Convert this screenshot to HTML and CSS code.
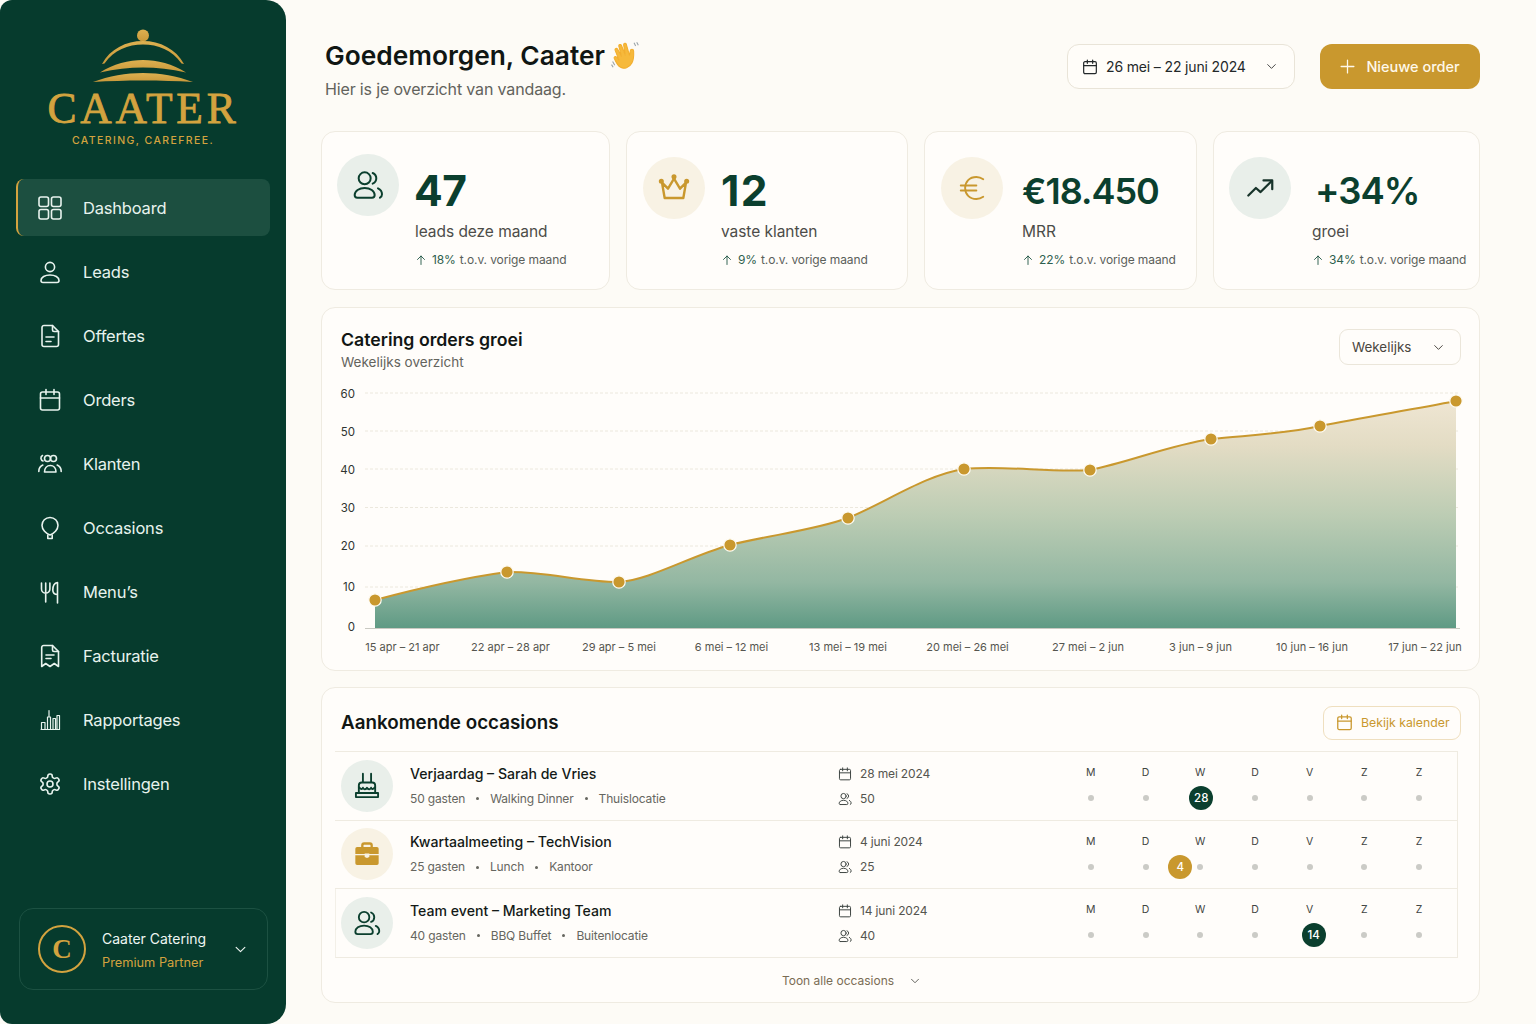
FILE: index.html
```html
<!DOCTYPE html>
<html lang="nl">
<head>
<meta charset="utf-8">
<title>Caater dashboard</title>
<link rel="stylesheet" href="styles.css">
</head>
<body>
<svg class="sprite" aria-hidden="true">
  <defs>
    <linearGradient id="goldg" x1="0" y1="0" x2="0" y2="1"><stop offset="0" stop-color="#dcb050"/><stop offset="1" stop-color="#c9993a"/></linearGradient>
    <linearGradient id="areag" gradientUnits="userSpaceOnUse" x1="0" y1="400" x2="0" y2="628"><stop offset="0" stop-color="#efe6d3"/><stop offset=".2" stop-color="#e3dcc4"/><stop offset=".5" stop-color="#bdcdb4"/><stop offset=".8" stop-color="#93b7a2"/><stop offset="1" stop-color="#5f9a84"/></linearGradient>
  </defs>
  <symbol id="i-grid" viewBox="0 0 24 24"><rect x="1" y="1" width="9.5" height="9.5" rx="2"/><rect x="13.5" y="1" width="9.5" height="9.5" rx="2"/><rect x="1" y="13.5" width="9.5" height="9.5" rx="2"/><rect x="13.5" y="13.5" width="9.5" height="9.5" rx="2"/></symbol>
  <symbol id="i-user" viewBox="0 0 24 24"><circle cx="12" cy="7" r="4.6"/><path d="M5 22.500h14a2 2 0 0 0 2-2c0-3.200-4-5.500-9-5.500s-9 2.300-9 5.500a2 2 0 0 0 2 2z"/></symbol>
  <symbol id="i-users" viewBox="0 0 24 24"><circle cx="9.500" cy="7" r="4.500"/><path d="M4 21.500h11a2 2 0 0 0 2-2c0-3-3.300-5.300-7.500-5.300S2 16.500 2 19.500a2 2 0 0 0 2 2z"/><path d="M15.500 3a4.300 4.300 0 0 1 0 8"/><path d="M19.500 14.500c2 .9 3 2.700 3 4.500 0 1.200-.6 2-1.500 2.500"/></symbol>
  <symbol id="i-file" viewBox="0 0 24 24"><path d="M6 1.500h8.500L20.500 7.500V20.500a2 2 0 0 1-2 2H6a2 2 0 0 1-2-2V3.500a2 2 0 0 1 2-2z"/><path d="M14.500 1.500V6a1.500 1.500 0 0 0 1.500 1.500h4.500"/><path d="M8 13h8M8 17.500h5"/></symbol>
  <symbol id="i-cal" viewBox="0 0 24 24"><rect x="2.500" y="4" width="19" height="18" rx="2"/><path d="M2.500 10h19M8 1.500v5M16 1.500v5"/></symbol>
  <symbol id="i-people" viewBox="0 0 24 24"><circle cx="9.500" cy="6.500" r="3"/><circle cx="15.500" cy="6.500" r="3"/><path d="M6.500 20c0-3.800 2.500-6.500 5.800-6.500s5.700 2.700 5.700 6.500z"/><path d="M4.500 3.500a3 3 0 0 0 .5 5.500M.8 19.500c0-3 1.500-5.500 4-6.500"/><path d="M23.200 19.500c0-3-1.500-5.500-4-6.500"/></symbol>
  <symbol id="i-balloon" viewBox="0 0 24 24"><path d="M12 1.500c-4.600 0-8 3.500-8 7.800 0 4.500 4 8.200 8 9.700 4-1.500 8-5.200 8-9.700 0-4.300-3.400-7.800-8-7.800z"/><path d="M9.800 19v3.500h4.400V19"/></symbol>
  <symbol id="i-fork" viewBox="0 0 24 24"><path d="M3.500 3v6a4.200 4.200 0 0 0 8.400 0V3M7.700 3v19"/><path d="M19.500 23V2.500c-3 .5-4.700 3.500-4.700 7.500 0 2.800 1.500 4.500 4.700 4.500"/></symbol>
  <symbol id="i-receipt" viewBox="0 0 24 24"><path d="M6 1.500h8.500L20.500 7.500V22.500l-4.200-3-4.300 3-4.300-3-4 3V3.500a2 2 0 0 1 2-2z"/><path d="M14.500 1.500V6A1.500 1.500 0 0 0 16 7.500h4.500"/><path d="M8 11h8M8 14.500h5"/></symbol>
  <symbol id="i-bars" viewBox="0 0 24 24"><path d="M3 21.500h18M3.500 21.500v-7h3.500v7M9.500 21.500V9h3v12.500M11 9V2.500M15 21.500v-11h2.500v11M19 21.500V7.500h2.500v14"/></symbol>
  <symbol id="i-gear" viewBox="0 0 24 24"><path d="M12.220 2h-.44a2 2 0 0 0-2 2v.18a2 2 0 0 1-1 1.730l-.43.25a2 2 0 0 1-2 0l-.15-.08a2 2 0 0 0-2.730.73l-.22.38a2 2 0 0 0 .73 2.730l.15.1a2 2 0 0 1 1 1.720v.51a2 2 0 0 1-1 1.740l-.15.09a2 2 0 0 0-.73 2.730l.22.38a2 2 0 0 0 2.730.73l.15-.08a2 2 0 0 1 2 0l.43.25a2 2 0 0 1 1 1.730V20a2 2 0 0 0 2 2h.44a2 2 0 0 0 2-2v-.18a2 2 0 0 1 1-1.730l.43-.25a2 2 0 0 1 2 0l.15.08a2 2 0 0 0 2.730-.73l.22-.39a2 2 0 0 0-.73-2.730l-.15-.08a2 2 0 0 1-1-1.740v-.5a2 2 0 0 1 1-1.740l.15-.09a2 2 0 0 0 .73-2.730l-.22-.38a2 2 0 0 0-2.730-.73l-.15.08a2 2 0 0 1-2 0l-.43-.25a2 2 0 0 1-1-1.730V4a2 2 0 0 0-2-2z"/><circle cx="12" cy="12" r="3"/></symbol>
  <symbol id="i-chev" viewBox="0 0 24 24"><path d="M5 8.500l7 7 7-7"/></symbol>
  <symbol id="i-plus" viewBox="0 0 24 24"><path d="M12 3v18M3 12h18"/></symbol>
  <symbol id="i-up" viewBox="0 0 24 24"><path d="M12 21V4M5 11l7-7 7 7"/></symbol>
  <symbol id="i-crown" viewBox="0 0 24 24"><path d="M3 8l4.500 4.500L12 5l4.500 7.500L21 8l-2 11.500H5z"/><circle cx="12" cy="3.500" r="1"/><circle cx="2.500" cy="7" r="1"/><circle cx="21.500" cy="7" r="1"/></symbol>
  <symbol id="i-euro" viewBox="0 0 24 24"><path d="M21 5A9.800 9.800 0 0 0 15.500 3.200C10 3.200 6.500 7 6.500 12s3.500 8.800 9 8.800A9.800 9.800 0 0 0 21 19"/><path d="M3 10h12.500M3 14h12.500"/></symbol>
  <symbol id="i-trend" viewBox="0 0 24 24"><path d="M2 18.500l6.500-6.500 4 3.500L22 6"/><path d="M15 5.500h7.500V13"/></symbol>
  <symbol id="i-cake" viewBox="0 0 24 24"><path d="M8.500 1.500v7M15.500 1.500v7"/><path d="M5 11.500c0-1.500 1-2.500 2.500-2.500h9c1.500 0 2.500 1 2.500 2.500V18H5z"/><path d="M5 13c1.500 2 3 2 3.500.5.500 1.500 2.500 2 3.500 0 1 2 3 1.500 3.500 0 .5 1.500 2 1.500 3.500-.5"/><path d="M2.500 18h19v3.500h-19z"/></symbol>
</svg>

<div class="app">
  <aside class="sidebar">
    <div class="brand">
      <svg class="cloche" viewBox="0 0 104 54" aria-hidden="true">
        <circle cx="52" cy="6.500" r="6" fill="url(#goldg)"/>
        <path d="M11 35C19 20 35 12 52 12s33 8 41 23l-2.500-.5C81 21 67 15.500 52 15.500S23 21 13.500 34.500z" fill="url(#goldg)"/>
        <path d="M9 43.500C22 35 38 31 52 31s30 4 43 12.500C80 40 66 38.500 52 38.500S24 40 9 43.500z" fill="url(#goldg)"/>
        <path d="M2 53C18 47 35 44 52 44s34 3 50 9C85 52 70 51.500 52 51.500S19 52 2 53z" fill="url(#goldg)"/>
      </svg>
      <div class="wordmark">CAATER</div>
      <div class="tagline">CATERING, CAREFREE.</div>
    </div>
    <nav class="nav">
      <a class="nav-item active"><svg class="ic nav-ic"><use href="#i-grid"/></svg><span>Dashboard</span></a>
      <a class="nav-item"><svg class="ic nav-ic"><use href="#i-user"/></svg><span>Leads</span></a>
      <a class="nav-item"><svg class="ic nav-ic"><use href="#i-file"/></svg><span>Offertes</span></a>
      <a class="nav-item"><svg class="ic nav-ic"><use href="#i-cal"/></svg><span>Orders</span></a>
      <a class="nav-item"><svg class="ic nav-ic"><use href="#i-people"/></svg><span>Klanten</span></a>
      <a class="nav-item"><svg class="ic nav-ic"><use href="#i-balloon"/></svg><span>Occasions</span></a>
      <a class="nav-item"><svg class="ic nav-ic"><use href="#i-fork"/></svg><span>Menu’s</span></a>
      <a class="nav-item"><svg class="ic nav-ic"><use href="#i-receipt"/></svg><span>Facturatie</span></a>
      <a class="nav-item"><svg class="ic nav-ic thin"><use href="#i-bars"/></svg><span>Rapportages</span></a>
      <a class="nav-item"><svg class="ic nav-ic"><use href="#i-gear"/></svg><span>Instellingen</span></a>
    </nav>
    <div class="profile">
      <div class="avatar">C</div>
      <div class="profile-text">
        <div class="profile-name">Caater Catering</div>
        <div class="profile-tier">Premium Partner</div>
      </div>
      <svg class="ic profile-chev"><use href="#i-chev"/></svg>
    </div>
  </aside>

  <main class="main">
    <header class="topbar">
      <div>
        <h1 class="title">Goedemorgen, Caater
          <svg class="wave" viewBox="0 0 28 28" aria-hidden="true">
            <path d="M9 25.500c-3-1.500-4.500-5-6-8.500-.5-1.300 1.200-2.200 2.200-1l2.300 2.800L3.800 9.500c-.5-1.500 1.500-2.300 2.300-1l3.800 7L7.300 5.800c-.4-1.600 1.800-2.300 2.500-.8l3.600 9.500-1.600-10c-.2-1.600 2-2 2.500-.5l3 10.500.7-4.500c.3-1.800 3-1.800 3.100.2.300 4.500 0 8.300-1.600 11.300-2.300 4.500-7.500 5.800-10.500 4z" fill="#f6b93b" stroke="#f2ae2e" stroke-width="1"/>
            <path d="M21.500 2.500l1.500 3M24 2l1.500 3M1.500 20l2 3.500M.5 23l1.500 2.500" stroke="#9aa3a8" stroke-width="1" fill="none"/>
          </svg>
        </h1>
        <p class="subtitle">Hier is je overzicht van vandaag.</p>
      </div>
      <div class="top-actions">
        <button class="date-btn"><svg class="ic date-ic"><use href="#i-cal"/></svg><span>26 mei – 22 juni 2024</span><svg class="ic date-chev"><use href="#i-chev"/></svg></button>
        <button class="new-btn"><svg class="ic plus-ic"><use href="#i-plus"/></svg><span>Nieuwe order</span></button>
      </div>
    </header>

    <section class="stats">
      <article class="stat stat-a">
        <div class="stat-icon green"><svg class="ic stat-ic"><use href="#i-users"/></svg></div>
        <div><div class="stat-num">47</div><div class="stat-label">leads deze maand</div><div class="stat-delta"><svg class="ic up-ic"><use href="#i-up"/></svg><b>18%</b> t.o.v. vorige maand</div></div>
      </article>
      <article class="stat">
        <div class="stat-icon gold"><svg class="ic stat-ic crown"><use href="#i-crown"/></svg></div>
        <div><div class="stat-num num-wide">12</div><div class="stat-label">vaste klanten</div><div class="stat-delta"><svg class="ic up-ic"><use href="#i-up"/></svg><b>9%</b> t.o.v. vorige maand</div></div>
      </article>
      <article class="stat stat-c">
        <div class="stat-icon gold"><svg class="ic stat-ic euro"><use href="#i-euro"/></svg></div>
        <div><div class="stat-num num-sm">€18.450</div><div class="stat-label">MRR</div><div class="stat-delta"><svg class="ic up-ic"><use href="#i-up"/></svg><b>22%</b> t.o.v. vorige maand</div></div>
      </article>
      <article class="stat stat-d">
        <div class="stat-icon green"><svg class="ic stat-ic trend"><use href="#i-trend"/></svg></div>
        <div><div class="stat-num num-sm num-plus">+34%</div><div class="stat-label">groei</div><div class="stat-delta"><svg class="ic up-ic"><use href="#i-up"/></svg><b>34%</b> t.o.v. vorige maand</div></div>
      </article>
    </section>

    <section class="panel chart-panel">
      <div class="chart-head">
        <div><h2 class="panel-title">Catering orders groei</h2><p class="panel-sub">Wekelijks overzicht</p></div>
        <button class="period-btn"><span>Wekelijks</span><svg class="ic period-chev"><use href="#i-chev"/></svg></button>
      </div>
      <svg class="chart" viewBox="322 380 1157 279" aria-label="Catering orders per week">
        <g class="grid-lines">
          <path d="M365 393H1460M365 431H1460M365 469H1460M365 507.500H1460M365 546H1460M365 587H1460"/>
        </g>
        <path class="axis" d="M365 628.500H1460"/>
        <path fill="url(#areag)" d="M375 600C420 588 470 577 507 572C545 571 580 582 619 582C650 580 690 556 730 545C770 535 815 530 848 518C885 503 925 475 964 469C1005 465 1050 473 1090 470C1130 462 1170 445 1211 439C1250 435 1285 434 1320 426C1365 417 1410 410 1456 401V628H375Z"/>
        <path class="line" d="M375 600C420 588 470 577 507 572C545 571 580 582 619 582C650 580 690 556 730 545C770 535 815 530 848 518C885 503 925 475 964 469C1005 465 1050 473 1090 470C1130 462 1170 445 1211 439C1250 435 1285 434 1320 426C1365 417 1410 410 1456 401"/>
        <g class="dots">
          <circle cx="375" cy="600" r="6.200"/><circle cx="507" cy="572" r="6.200"/><circle cx="619" cy="582" r="6.200"/><circle cx="730" cy="545" r="6.200"/><circle cx="848" cy="518" r="6.200"/><circle cx="964" cy="469" r="6.200"/><circle cx="1090" cy="470" r="6.200"/><circle cx="1211" cy="439" r="6.200"/><circle cx="1320" cy="426" r="6.200"/><circle cx="1456" cy="401" r="6.200"/>
        </g>
        <g class="y-labels">
          <text x="355" y="397.500">60</text><text x="355" y="435.500">50</text><text x="355" y="473.500">40</text><text x="355" y="512">30</text><text x="355" y="550">20</text><text x="355" y="591">10</text><text x="355" y="631">0</text>
        </g>
        <g class="x-labels">
          <text x="402.500" y="651">15 apr – 21 apr</text><text x="510.500" y="651">22 apr – 28 apr</text><text x="619" y="651">29 apr – 5 mei</text><text x="731.500" y="651">6 mei – 12 mei</text><text x="848" y="651">13 mei – 19 mei</text><text x="967.500" y="651">20 mei – 26 mei</text><text x="1088" y="651">27 mei – 2 jun</text><text x="1200.500" y="651">3 jun – 9 jun</text><text x="1312" y="651">10 jun – 16 jun</text><text x="1425" y="651">17 jun – 22 jun</text>
        </g>
      </svg>
    </section>

    <section class="panel occ-panel">
      <div class="occ-head">
        <h2 class="occ-title">Aankomende occasions</h2>
        <button class="cal-btn"><svg class="ic cal-ic"><use href="#i-cal"/></svg><span>Bekijk kalender</span></button>
      </div>
      <div class="occ-list">
        <div class="occ-row">
          <div class="occ-main">
            <div class="occ-icon green"><svg class="ic occ-ic"><use href="#i-cake"/></svg></div>
            <div><div class="occ-name">Verjaardag – Sarah de Vries</div><div class="occ-meta"><span>50 gasten</span><i></i><span>Walking Dinner</span><i></i><span>Thuislocatie</span></div></div>
          </div>
          <div class="occ-when">
            <div class="when-line"><svg class="ic when-ic"><use href="#i-cal"/></svg><span>28 mei 2024</span></div>
            <div class="when-line"><svg class="ic when-ic"><use href="#i-users"/></svg><span>50</span></div>
          </div>
          <div class="week">
            <span class="wd">M</span><span class="wd">D</span><span class="wd">W</span><span class="wd">D</span><span class="wd">V</span><span class="wd">Z</span><span class="wd">Z</span>
            <span class="dot"></span><span class="dot"></span><span class="dot"><b class="badge b-green">28</b></span><span class="dot"></span><span class="dot"></span><span class="dot"></span><span class="dot"></span>
          </div>
        </div>
        <div class="occ-row">
          <div class="occ-main">
            <div class="occ-icon gold"><svg class="brief" viewBox="0 0 24 24" aria-hidden="true"><path d="M8 6.500V4.500A1.500 1.500 0 0 1 9.500 3h5A1.500 1.500 0 0 1 16 4.500v2" fill="none" stroke="#c9982e" stroke-width="2"/><path d="M3.500 6h17A1.500 1.500 0 0 1 22 7.500v4.500H14v-.5h-4v.5H2V7.500A1.500 1.500 0 0 1 3.500 6zM2 13h8v1.500l2 1 2-1V13h8v7a1.500 1.500 0 0 1-1.500 1.500h-17A1.500 1.500 0 0 1 2 20z" fill="#c9982e"/></svg></div>
            <div><div class="occ-name">Kwartaalmeeting – TechVision</div><div class="occ-meta"><span>25 gasten</span><i></i><span>Lunch</span><i></i><span>Kantoor</span></div></div>
          </div>
          <div class="occ-when">
            <div class="when-line"><svg class="ic when-ic"><use href="#i-cal"/></svg><span>4 juni 2024</span></div>
            <div class="when-line"><svg class="ic when-ic"><use href="#i-users"/></svg><span>25</span></div>
          </div>
          <div class="week">
            <span class="wd">M</span><span class="wd">D</span><span class="wd">W</span><span class="wd">D</span><span class="wd">V</span><span class="wd">Z</span><span class="wd">Z</span>
            <span class="dot"></span><span class="dot"></span><span class="dot"><b class="badge b-gold">4</b></span><span class="dot"></span><span class="dot"></span><span class="dot"></span><span class="dot"></span>
          </div>
        </div>
        <div class="occ-row">
          <div class="occ-main">
            <div class="occ-icon green"><svg class="ic occ-ic"><use href="#i-users"/></svg></div>
            <div><div class="occ-name">Team event – Marketing Team</div><div class="occ-meta"><span>40 gasten</span><i></i><span>BBQ Buffet</span><i></i><span>Buitenlocatie</span></div></div>
          </div>
          <div class="occ-when">
            <div class="when-line"><svg class="ic when-ic"><use href="#i-cal"/></svg><span>14 juni 2024</span></div>
            <div class="when-line"><svg class="ic when-ic"><use href="#i-users"/></svg><span>40</span></div>
          </div>
          <div class="week">
            <span class="wd">M</span><span class="wd">D</span><span class="wd">W</span><span class="wd">D</span><span class="wd">V</span><span class="wd">Z</span><span class="wd">Z</span>
            <span class="dot"></span><span class="dot"></span><span class="dot"></span><span class="dot"></span><span class="dot"><b class="badge b-green b-right">14</b></span><span class="dot"></span><span class="dot"></span>
          </div>
        </div>
      </div>
      <div class="occ-foot"><span>Toon alle occasions</span><svg class="ic foot-chev"><use href="#i-chev"/></svg></div>
    </section>
  </main>
</div>
</body>
</html>
```

FILE: styles.css
```css
* { box-sizing: border-box; }
html, body { margin: 0; padding: 0; }
body {
  width: 1536px; height: 1024px; overflow: hidden;
  background: #fdfbf6; color: #14201b;
  font-family: Inter, "Noto Sans", "Liberation Sans", sans-serif;
}
.sprite { width: 0; height: 0; position: absolute; }
.ic { fill: none; stroke: currentColor; stroke-width: 1.8; stroke-linecap: round; stroke-linejoin: round; flex: none; display: block; }
button { font-family: inherit; cursor: pointer; }
h1, h2, p { margin: 0; }

.app { display: flex; height: 1024px; }

/* Sidebar */
.sidebar {
  width: 286px; flex: none; height: 1024px;
  background: #063b2d; border-radius: 12px 20px 20px 12px;
  display: flex; flex-direction: column; padding: 0 16px 34px;
}
.brand { display: flex; flex-direction: column; align-items: center; padding-top: 29px; height: 179px; }
.cloche { width: 104px; height: 54px; display: block; margin-left: -1px; }
.wordmark { font-family: "Liberation Serif", serif; font-size: 43.500px; line-height: 40px; letter-spacing: 3.800px; margin-top: 5px; margin-right: -1px; color: #d3a33f; font-weight: 400; -webkit-text-stroke: .8px #d3a33f; }
.tagline { font-size: 10.500px; line-height: 14px; letter-spacing: 1.400px; color: #d3a33f; font-weight: 500; margin-top: 6px; }
.nav { display: flex; flex-direction: column; gap: 7px; }
.nav-item { height: 57px; display: flex; align-items: center; padding-left: 20px; gap: 21px; color: #e8f3ee; font-size: 16.500px; letter-spacing: -.2px; border-radius: 8px; border-left: 2px solid transparent; }
.nav-item.active { background: #1c4f40; border-left: 2px solid #d3a33f; }
.nav-ic { width: 24px; height: 24px; stroke-width: 1.600; }
.nav-ic.thin { stroke-width: 1.200; }
.profile { margin: auto 2px 0 3px; height: 82px; display: flex; align-items: center; border: 1px solid #1c5142; border-radius: 14px; padding: 0 18px; }
.avatar { width: 48px; height: 48px; border-radius: 50%; border: 2px solid #d3a33f; color: #d3a33f; font-family: "Liberation Serif", serif; font-size: 27px; font-weight: 700; display: flex; align-items: center; justify-content: center; flex: none; }
.profile-text { margin-left: 16px; flex: 1; padding-top: 3px; }
.profile-name { font-size: 14px; line-height: 20px; color: #eef6f2; }
.profile-tier { font-size: 12.800px; line-height: 20px; margin-top: 4px; color: #d3a33f; }
.profile-chev { width: 15px; height: 15px; color: #eef6f2; margin-right: 1px; }

/* Main */
.main { flex: 1; min-width: 0; padding: 42px 56px 0 35px; display: flex; flex-direction: column; }
.topbar { display: flex; justify-content: space-between; padding-left: 4px; height: 89px; }
.title { font-size: 26.300px; line-height: 24px; font-weight: 600; color: #101613; display: flex; align-items: center; gap: 6px; }
.wave { width: 30px; height: 30px; display: block; margin-top: -2px; }
.subtitle { font-size: 16px; letter-spacing: -.15px; line-height: 22px; color: #62625c; margin-top: 8px; }
.top-actions { display: flex; gap: 25px; height: 45px; margin-top: 2px; }
.date-btn { width: 228px; height: 45px; background: #fffdf9; border: 1px solid #e9e4d8; border-radius: 12px; display: flex; align-items: center; padding: 0 0 0 14px; font-size: 14px; letter-spacing: -.15px; color: #23282a; }
.date-ic { width: 16px; height: 16px; margin-right: 8px; }
.date-chev { width: 13px; height: 13px; margin-left: 19px; color: #444; }
.new-btn { width: 160px; height: 45px; background: #c9982e; border: 0; border-radius: 12px; color: #fff8ea; display: flex; align-items: center; justify-content: center; gap: 10px; padding-left: 5px; font-size: 14.500px; font-weight: 500; }
.plus-ic { width: 17px; height: 17px; }

/* Stats */
.stats { display: grid; grid-template-columns: 289px 282px 273px minmax(0, 1fr); gap: 16px; height: 159px; }
.stat { background: #fffdfa; border: 1px solid #efebe1; border-radius: 14px; display: flex; gap: 16px; padding: 25px 15px 0 16px; min-width: 0; }
.stat-a { padding-top: 22px; padding-left: 15px; }
.stat-c { gap: 19px; }
.stat-d { gap: 21px; padding-left: 15px; }
.stat-icon { width: 62px; height: 62px; border-radius: 50%; display: flex; align-items: center; justify-content: center; flex: none; }
.green { background: #e9efea; color: #0b3f2e; }
.gold { background: #f8f2e4; color: #c9982e; }
.stat-ic { width: 32px; height: 32px; stroke-width: 1.500; }
.crown { stroke-width: 1.800; }
.euro { width: 30px; height: 30px; }
.trend { width: 28px; height: 28px; color: #17332a; stroke-width: 1.900; }
.stat-num { font-size: 42.500px; line-height: 50px; margin-top: 9px; margin-left: -1px; font-weight: 700; color: #0b3f2e; letter-spacing: -.5px; height: 49px; }
.stat-a .stat-num { margin-top: 12px; }
.num-wide { letter-spacing: 1.500px; margin-left: 0; }
.num-sm { font-size: 36px; font-weight: 600; letter-spacing: -1px; margin-left: 0; }
.num-plus { font-size: 36.500px; margin-left: 3px; }
.stat-label { font-size: 15.500px; letter-spacing: -.05px; line-height: 22px; color: #4c4c48; margin-top: 6px; }
.stat-delta { font-size: 12px; letter-spacing: -.1px; line-height: 16px; margin-top: 9px; color: #5b5f5a; display: flex; align-items: center; white-space: nowrap; }
.stat-delta b { font-weight: 400; color: #2e5f4e; margin-right: 4px; }
.up-ic { width: 12px; height: 12px; color: #1f5644; margin-right: 5px; }

/* Panels */
.panel { background: #fffdfa; border: 1px solid #efebe1; border-radius: 14px; }
.chart-panel { height: 364px; margin-top: 17px; }
.chart-head { display: flex; justify-content: space-between; padding: 21px 18px 0 19px; height: 72px; }
.panel-title { font-size: 17.700px; line-height: 22px; font-weight: 600; color: #111614; }
.panel-sub { font-size: 13.500px; line-height: 20px; color: #63635d; margin-top: 1px; }
.period-btn { width: 122px; height: 36px; background: #fffdfa; border: 1px solid #ebe6da; border-radius: 9px; display: flex; align-items: center; padding: 0 0 0 12px; font-size: 13.400px; color: #4a4640; }
.period-chev { width: 13px; height: 13px; margin-left: 21px; }
.chart { display: block; width: 1157px; height: 279px; }
.grid-lines path { stroke: #ece8dd; stroke-width: 1; stroke-dasharray: 3 2; fill: none; }
.axis { stroke: #c9c9c2; stroke-width: 1; fill: none; }
.line { stroke: #c9982e; stroke-width: 2; fill: none; }
.dots circle { fill: #c9982e; stroke: #fffdf6; stroke-width: 1.200; }
.y-labels text { font-size: 11.500px; fill: #2f3431; text-anchor: end; }
.x-labels text { font-size: 11px; fill: #55554f; text-anchor: middle; }

.occ-panel { height: 316px; margin-top: 16px; padding: 0 21px 0 13px; }
.occ-head { display: flex; align-items: center; justify-content: space-between; height: 63px; padding-left: 6px; margin-right: -3px; padding-top: 6px; }
.occ-title { font-size: 18.800px; line-height: 26px; font-weight: 600; color: #111614; }
.cal-btn { width: 138px; height: 34px; background: #fffdfa; border: 1px solid #efdfbf; border-radius: 9px; display: flex; align-items: center; padding: 0 0 0 12px; gap: 8px; color: #c9982e; font-size: 12.300px; }
.cal-ic { width: 17px; height: 17px; }
.occ-list { border-top: 1px solid #efebe1; border-right: 1px solid #efebe1; }
.occ-row { height: 68.500px; display: grid; grid-template-columns: 497px 225.500px 383px; align-items: center; border-bottom: 1px solid #efebe1; padding-left: 6px; }
.occ-row:last-child { border-left: 1px solid #f3f0e8; padding-left: 5px; }
.occ-main { display: flex; align-items: center; gap: 17px; }
.occ-icon { width: 52px; height: 52px; border-radius: 50%; display: flex; align-items: center; justify-content: center; flex: none; }
.occ-ic { width: 28px; height: 28px; stroke-width: 1.600; }
.brief { width: 28px; height: 28px; display: block; }
.occ-name { font-size: 14.100px; line-height: 20px; font-weight: 500; color: #141a17; }
.occ-meta { font-size: 12px; letter-spacing: -.15px; line-height: 18px; margin-top: 6px; color: #66665f; display: flex; align-items: center; gap: 11px; }
.occ-meta i { width: 3px; height: 3px; border-radius: 50%; background: #66665f; display: block; }
.occ-when { display: flex; flex-direction: column; gap: 7px; padding-top: 1px; }
.when-line { display: flex; align-items: center; gap: 8px; font-size: 12px; letter-spacing: -.15px; line-height: 18px; color: #55554f; }
.when-ic { width: 14px; height: 14px; stroke-width: 1.700; color: #3e4542; }
.week { display: grid; grid-template-columns: repeat(7, 1fr); grid-template-rows: 18px 24px; row-gap: 4px; padding-top: 3px; justify-items: center; align-items: center; }
.wd { font-size: 10.500px; color: #3f4542; line-height: 18px; }
.dot { width: 6px; height: 6px; border-radius: 50%; background: #cbcbc6; position: relative; }
.badge { position: absolute; left: -8px; top: -9px; width: 24px; height: 24px; border-radius: 50%; color: #fff; font-size: 11.500px; font-weight: 500; display: flex; align-items: center; justify-content: center; }
.b-green { background: #0b3f2e; }
.b-gold { background: #c9982e; left: -29px; }
.b-right { left: -5px; }
.occ-foot { display: flex; justify-content: center; align-items: center; gap: 15px; height: 46px; color: #7a6c54; font-size: 12px; padding-right: 90px; }
.foot-chev { width: 12px; height: 12px; color: #55554f; }
```
